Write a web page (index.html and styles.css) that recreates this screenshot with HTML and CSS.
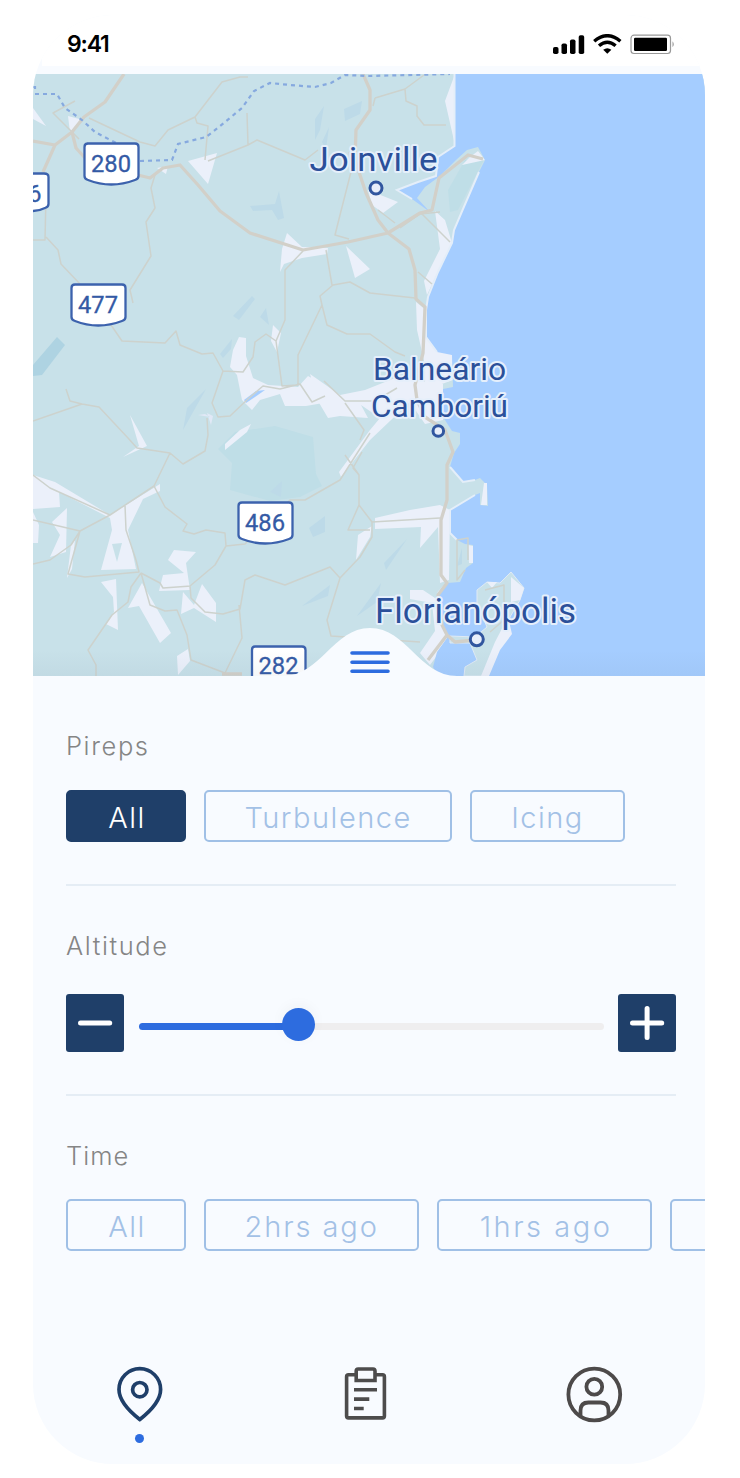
FILE: index.html
```html
<!DOCTYPE html>
<html lang="en">
<head>
<meta charset="utf-8">
<title>Pireps map</title>
<link rel="stylesheet" href="styles.css">
</head>
<body>
<main class="phone">
  <header class="status">
    <span class="clock">9:41</span>
    <svg class="status-icons" width="123" height="22" viewBox="0 0 123 22">
      <rect x="0" y="13" width="5.5" height="7" rx="1.8"/>
      <rect x="8.5" y="9.5" width="5.5" height="10.500" rx="1.800"/>
      <rect x="17" y="5.500" width="5.500" height="14.500" rx="1.800"/>
      <rect x="25.700" y="1.300" width="5.500" height="18.700" rx="1.800"/>
      <g fill="none" stroke="#000" stroke-width="3.400">
        <path d="M41.200 7.200Q54.300 -3.800 67.400 7.200"/>
        <path d="M46 11.700Q54.300 4.600 62.600 11.700"/>
      </g>
      <path d="M50.200 15.800Q54.300 12.600 58.400 15.800L54.300 19.800Z"/>
      <rect x="78" y="1.200" width="39.500" height="18.300" rx="3" fill="none" stroke="#999" stroke-width="1.200"/>
      <rect x="81" y="3.700" width="33" height="13.300" rx="1.200"/>
      <path d="M119.500 7.200q2.600 3 0 6z" fill="#999"/>
    </svg>
  </header>

  <section class="map">
    <svg class="map-art" width="672" height="602" viewBox="33 74 672 602">
      <rect class="land" x="33" y="74" width="672" height="602"/>
      <g class="forest">
        <path d="M218 449L235 432L275 426L313 437L316 474L322 486L300 497L270 501L230 490L232 463Z"/>
        <path d="M448 190L465 160L484 160L458 210L450 212Z"/>
      </g>
      <path class="lake" d="M33 365L57 337L65 345L42 375L33 376Z"/>
      <g class="hills">
        <path d="M315 119L324 106L320 130L315 140ZM344 109L362 101L360 114L345 121ZM322 142L329 127L326 149ZM250 206L275 204L279 191L284 218L278 220L272 210L253 211ZM233 316L252 296L255 299L239 320ZM260 317L266 308L269 325ZM220 354L232 339L231 349L223 358ZM183 430L187 408L206 389ZM309 528L325 516L325 532L313 537ZM302 606L330 585L328 596ZM384 563L407 539L386 570ZM357 616L381 583L377 602ZM457 566L462 548L462 564ZM270 492L282 481L281 497Z"/>
      </g>
      <g class="urban">
        <path d="M33 108L46 126L33 119ZM68 116L83 120L70 132ZM188 161L217 153L208 184ZM157 168L168 166L166 174ZM282 249L287 233L302 247L328 248L327 254L302 258L284 264L280 272ZM346 246L370 269L355 278ZM233 350L239 337L246 338L246 356L253 378L268 385L298 387L308 376L326 386L329 402L306 406L285 406L280 394L260 400L252 410L242 400L237 375L230 367ZM273 325L281 333L277 352L271 341ZM310 374L340 395L365 390L400 376L419 381L443 384L443 420L425 424L410 402L370 440L341 477L339 472L370 430L380 418L361 405L368 418L340 416L328 418L318 401ZM368 190L398 202L383 213L372 205ZM435 211L445 220L452 243L435 278L427 295L424 281L440 249ZM416 302L426 310L426 337L452 355L453 380L425 390L425 365L417 330ZM455 74L455 145L450 123L445 101ZM462 165L470 157L478 151L485 160ZM130 415L147 446L123 457L139 446Z"/>
        <path d="M33 475L55 482L110 515L160 484L160 491L143 499L128 530L136 569L101 570L112 530L110 518L59 492L60 507L33 509ZM52 522L67 508L66 552L50 557L60 535ZM33 512L39 525L38 543L33 543ZM71 545L75 540L72 569L67 578ZM101 582L116 579L118 630L106 624L114 612L113 597ZM142 583L171 633L160 643L139 606L128 608ZM174 550L196 552L186 563L190 590L159 591L163 575L184 573L168 560ZM183 592L194 605L202 584L216 603L216 622L194 608L181 614ZM177 656L188 649L190 661L178 675ZM225 444L240 430L251 424L247 432L225 450ZM375 518L410 510L440 505L450 510L449 580L440 583L438 527L420 548L421 527L375 529ZM358 535L372 526L370 537L356 560ZM410 590L423 590L438 600L443 625L450 638L430 665L420 653L435 631L432 603L410 599Z"/>
      </g>
      <path class="urban-blue" d="M205 414L198 415L210 417ZM211 425L207 413L213 416Z"/>
      <path class="park" d="M112 544L122 543L117 562Z"/>
      <path class="sea" d="M705 74H455V146L438 157L436 176L418 182L397 190L412 199L430 212L417 198L425 187L440 176L456 160L467 150L478 147L485 160L479 172L470 193L463 209L454 230L452 243L438 272L428 297L426 310V337L437 352L452 355L453 387L443 389V417L452 431L460 433V444L454 453L450 467L463 482L475 480L480 478L487 485L488 506L480 505V493L475 495L450 510V533L457 540L465 544L473 545V563L466 568L460 582L447 583L438 593L443 627L447 638L437 652L433 667L438 676H705Z"/>
      <path class="river" d="M244 400L256 391L265 390L255 397L246 403Z"/>
      <path class="island" d="M477 590L487 582L500 583L511 572L524 588L520 600L510 617L508 633L500 647L488 676H464L465 667L477 660L470 643L450 643V636L475 637L487 627L477 603Z"/>
      <path class="urban" d="M511 577L524 588L520 600L511 602ZM508 617L512 634L500 650L489 676H481L495 642ZM487 582L497 582L492 588ZM484 483H487V505H481ZM468 545L473 546V563H469Z"/>
      <path class="coast" d="M454.500 74V146L438 157L436 176L418 182L397 190L412 199M479 172L463 209L454 230L452 243L438 272L428 297L426 310V337L437 352M450 467L463 482L475 480M475 495L450 510V533L457 540M447 583L438 593"/>
      <g class="roads">
        <path d="M79 139L53 113L75 101M89 118L140 142L155 146L168 130L195 117L222 82L240 77H248M195 117L197 123L208 126L205 160M247 113L248 145L208 161M248 145L257 140L305 160L318 150M349 152L352 168L340 215L335 235L349 239M155 175L151 188L155 208L146 222L151 256L130 290L133 303M46 195L45 240L33 240M46 237L58 250L61 264L80 284M111 325L122 341L165 343L176 331L180 345L202 354L213 353L223 371L243 372L253 357L255 342L266 334L276 341L285 320L285 270L303 251M223 371L212 403L218 417L230 416L249 398L263 386L280 389L300 384L312 402L325 396M276 341L282 386L298 385V355L322 305L320 296L333 285L350 282L370 293L415 298M322 305L327 325L347 334L370 334L395 352L405 356M326 250L332 285M324 381L345 401L375 401L397 388M33 421L82 404L99 407L128 438L137 448L170 453L183 464L205 451L208 435L207 418M66 389L70 401L82 404M170 453L154 486L110 515L80 531L33 520M33 475L50 488L110 515M80 531L71 545L50 560L33 564M80 531L68 574L85 577L139 572L136 560L126 530L125 505M154 486L165 507L187 524L183 531L194 534L206 530L225 533L226 546L245 544L290 500L305 500L340 480L370 433M226 546L215 565L190 586L191 598L205 612L223 614L240 609L245 580L255 575L285 585L330 567L340 578L327 620L331 636L420 642M141 573L160 583L163 588L191 586M141 573L131 587L128 602L112 615L88 650L96 665V676M141 573L150 605L165 611L177 610L187 635L191 660L225 673L242 638L239 605M340 578L360 557L372 537L372 522L359 505L348 530H370M359 505V475L345 455M362 452L353 468L359 475M372 522L440 518M360 440L364 430L345 403M378 210L395 223M420 212L450 242M418 272L432 284M465 570L457 580L457 540L468 538V560M485 590L504 585V620L490 632"/>
        <path d="M375 98L405 89L424 75M405 89L406 101L417 106L417 116L424 125H446M373 106L375 98M440 212L420 214L400 228"/>
      </g>
      <g class="highways">
        <path d="M33 141L55 145L72 132L84 117L105 102L124 74M72 132L76 148L85 158M55 145L43 172M138 175L150 178L163 168L180 165L198 185L220 211L250 233L303 250L348 242L388 233L420 213L432 210L439 178L468 155L483 159M363 74L370 90V110L356 130L355 160L366 193L378 220L388 233L409 249L415 270L416 299L425 307L423 353L415 385L417 400L425 417L445 430L453 452L447 465V500L441 520V575L447 583L438 595L442 625L447 635L428 660M447 635L455 642L475 640M222 674H242"/>
      </g>
      <g class="border">
        <path d="M33 87H35V93M35 94H57L65 108L82 120L95 132L118 144M140 161L172 160L178 144L206 137L219 127L242 108L254 91L270 83L290 85L315 87L331 83L345 75L369 76L450 74"/>
      </g>
      <g class="shields">
        <path d="M87 143.500H135Q138.500 143.500 138.500 147V176Q138.500 179 135 180Q111 189 88 180Q84.500 179 84.500 176V147Q84.500 143.500 88 143.500Z"/>
        <path d="M33 173.500H44Q48.500 173.500 48.500 177V204Q48.500 207 45 208Q39 211 33 211"/>
        <path d="M75 284.500H122Q125.500 284.500 125.500 288V317Q125.500 320 122 321Q98 330 75 321Q71.500 320 71.500 317V288Q71.500 284.500 75 284.500Z"/>
        <path d="M242 502.500H289Q292.500 502.500 292.500 506V535Q292.500 538 289 539Q265 548 242 539Q238.500 538 238.500 535V506Q238.500 502.500 242 502.500Z"/>
        <path d="M255 646.500H302Q305.500 646.500 305.500 650V679Q305.500 682 302 683H252V650Q252 646.500 255 646.500Z"/>
      </g>
      <g class="shield-text">
        <text x="91" y="171.500" textLength="40" lengthAdjust="spacingAndGlyphs">280</text>
        <text x="28" y="202">6</text>
        <text x="78" y="313" textLength="40" lengthAdjust="spacingAndGlyphs">477</text>
        <text x="245" y="530.500" textLength="40" lengthAdjust="spacingAndGlyphs">486</text>
        <text x="258.500" y="674" textLength="40" lengthAdjust="spacingAndGlyphs">282</text>
      </g>
      <g class="towns">
        <circle cx="376" cy="188" r="6"/>
        <circle cx="438.300" cy="431" r="5.300"/>
        <circle cx="476.800" cy="639.300" r="6.500"/>
      </g>
      <g class="labels">
        <text x="309.500" y="170.500" font-size="34" textLength="128" lengthAdjust="spacingAndGlyphs">Joinville</text>
        <text x="373" y="379.500" font-size="31" textLength="133" lengthAdjust="spacingAndGlyphs">Balneário</text>
        <text x="371" y="416.500" font-size="31" textLength="137" lengthAdjust="spacingAndGlyphs">Camboriú</text>
        <text x="375" y="622.500" font-size="35" textLength="201" lengthAdjust="spacingAndGlyphs">Florianópolis</text>
      </g>
    </svg>
    <svg class="handle" width="174" height="49" viewBox="283 628 174 49">
      <path d="M283 676C321 676 333 628 370 628S419 676 457 676V677H283Z" fill="#f8fbff"/>
      <path d="M352 653H388M352 662.200H388M352 671.300H388" stroke="#2d6cdf" stroke-width="3.600" stroke-linecap="round"/>
    </svg>
  </section>

  <section class="panel">
    <div class="group">
      <h2 class="label label-pireps">Pireps</h2>
      <div class="chips">
        <button class="chip chip-all active">All</button>
        <button class="chip chip-turbulence">Turbulence</button>
        <button class="chip chip-icing">Icing</button>
      </div>
    </div>
    <div class="group">
      <h2 class="label label-altitude">Altitude</h2>
      <div class="range">
        <button class="step" aria-label="Decrease"><svg width="58" height="58" viewBox="0 0 58 58"><path d="M14.500 29H43.700"/></svg></button>
        <div class="track"><div class="fill" style="width:34.500%"></div><div class="thumb" style="left:34.500%"></div></div>
        <button class="step" aria-label="Increase"><svg width="58" height="58" viewBox="0 0 58 58"><path d="M14.500 29H43.700M29.100 14.400V43.600"/></svg></button>
      </div>
    </div>
    <div class="group group-time">
      <h2 class="label label-time">Time</h2>
      <div class="chips">
        <button class="chip chip-all">All</button>
        <button class="chip chip-hours">2hrs ago</button>
        <button class="chip chip-hours chip-one">1hrs ago</button>
        <button class="chip chip-hours" aria-label="More"></button>
      </div>
    </div>
  </section>

  <nav class="tabs">
    <a class="tab tab-map">
      <svg width="46" height="56" viewBox="117 1366 46 56" fill="none" stroke="#1f3f69" stroke-width="3.700">
        <path d="M139.800 1419.500C129 1411 119 1401 119 1389.500A20.800 20.800 0 0 1 160.600 1389.500C160.600 1401 150.600 1411 139.800 1419.500Z"/>
        <circle cx="139.800" cy="1389.700" r="7.200"/>
      </svg>
      <span class="dot"></span>
    </a>
    <a class="tab tab-list">
      <svg width="43" height="56" viewBox="344 1366 43 56" fill="none" stroke="#4d4c4c" stroke-width="3.600">
        <path d="M355.500 1374.800H348.500Q346.600 1374.800 346.600 1376.700V1416Q346.600 1417.900 348.500 1417.900H382.500Q384.400 1417.900 384.400 1416V1376.700Q384.400 1374.800 382.500 1374.800H376"/>
        <path d="M356.200 1380.500V1371Q356.200 1369 358.200 1369H373Q375 1369 375 1371V1380.500ZM354 1389.700H377M354 1399.100H369.300M354 1408.500H363.700"/>
      </svg>
    </a>
    <a class="tab tab-user">
      <svg width="57" height="57" viewBox="566 1366 57 57" fill="none" stroke="#4d4a4a" stroke-width="3.800">
        <circle cx="594.300" cy="1394.500" r="25.900"/>
        <circle cx="594.300" cy="1386.700" r="7.900"/>
        <path d="M580.500 1416V1410.500Q580.500 1402.500 588.500 1402.500H600.500Q608.500 1402.500 608.500 1410.500V1416"/>
      </svg>
    </a>
  </nav>
</main>
</body>
</html>
```
FILE: styles.css
```css
body {
  margin: 0;
  padding: 15px 35px 14px 33px;
  background: #fff;
  font-family: Inter, "Liberation Sans", sans-serif;
}

.phone {
  width: 672px;
  height: 1449px;
  overflow: hidden;
  border-radius: 80px;
  background: #f8fbff;
}

.status {
  display: flex;
  justify-content: space-between;
  align-items: flex-start;
  box-sizing: border-box;
  height: 51px;
  margin: 0 3px 8px 9px;
  padding: 14px 26px 0 24px;
  background: #fff;
}

.clock {
  padding-left: 1px;
  color: #000;
  font-size: 23px;
  font-weight: 600;
  line-height: 30px;
  letter-spacing: -1.2px;
}

.status-icons { margin-top: 5px; }

.map {
  position: relative;
  height: 602px;
}

.map::after {
  content: "";
  position: absolute;
  inset: auto 0 0;
  height: 26px;
  background: linear-gradient(rgba(90, 110, 140, 0), rgba(90, 110, 140, .06));
}

.map-art { display: block; }
.land { fill: #c8e1e9; }
.park { fill: #c8e1e9; }
.forest { fill: #bfdee7; }
.lake { fill: #aed3e2; }
.hills { fill: #bddae8; }
.urban { fill: #ebf0fa; }
.urban-blue { fill: #e1e8f6; }
.sea { fill: #a5cdff; }
.river { fill: #a5cdff; }
.island { fill: #c8e1e9; stroke: #dfeaf5; stroke-width: 1; }
.coast { fill: none; stroke: #e4eef9; stroke-width: 2; }
.roads { fill: none; stroke: #cdd2cd; stroke-width: 1.5; stroke-linejoin: round; }
.highways { fill: none; stroke: #d2d0c9; stroke-width: 3.3; stroke-linejoin: round; }
.border { fill: none; stroke: #86a9df; stroke-width: 2.2; stroke-dasharray: 4 4; }
.shields { fill: #fff; stroke: #3c62ad; stroke-width: 2.3; }

.shield-text {
  fill: #345aa5;
  stroke: #345aa5;
  stroke-width: .3px;
  font: 400 24px Roboto, sans-serif;
}

.towns { fill: #e8eefa; stroke: #31569f; stroke-width: 3; }

.labels {
  fill: #2b509a;
  stroke: #e5effb;
  stroke-width: 4px;
  stroke-linejoin: round;
  paint-order: stroke;
  font-family: Roboto, sans-serif;
}

.handle {
  position: absolute;
  z-index: 1;
  left: 250px;
  bottom: -1px;
}

.panel {
  display: flex;
  flex-direction: column;
  padding: 10px 0 0 33px;
}

.group {
  width: 610px;
  padding: 45px 0 42px;
  border-bottom: 2px solid #e5edf5;
  box-sizing: border-box;
}

.group-time { border-bottom: 0; }

.label {
  margin: 0;
  color: #858585;
  font-size: 25.5px;
  font-weight: 300;
  line-height: 30px;
  letter-spacing: 1px;
}

.label-pireps { letter-spacing: 1.6px; }
.label-altitude { letter-spacing: 1.6px; }

.chips {
  display: flex;
  gap: 18.4px;
  margin-top: 29px;
}

.group-time .chips { margin-top: 28px; }

.chip {
  flex: none;
  box-sizing: border-box;
  height: 52px;
  padding: 3px 0 0;
  border: 2px solid #a0c0e6;
  border-radius: 5px;
  background: transparent;
  color: #a3c1e6;
  font: 300 29px/40px Inter, "Liberation Sans", sans-serif;
  letter-spacing: 1.5px;
  white-space: nowrap;
}

.chip.active {
  border-color: #1f3f69;
  background: #1f3f69;
  color: #fff;
}

.chip-all { width: 120px; padding-left: 2px; }
.chip-turbulence { width: 247.5px; }
.chip-icing { width: 154.5px; }
.chip-hours { width: 214.5px; letter-spacing: 1.9px; }
.chip-one { padding-left: 3px; letter-spacing: 2.5px; }

.range {
  display: flex;
  align-items: center;
  gap: 14.5px;
  margin-top: 33px;
}

.step {
  flex: none;
  width: 58px;
  height: 58px;
  padding: 0;
  border: 0;
  border-radius: 3px;
  background: #1f3f69;
}

.step svg {
  display: block;
  fill: none;
  stroke: #fff;
  stroke-width: 5;
  stroke-linecap: round;
}

.track {
  position: relative;
  flex: 1;
  height: 7px;
  margin-top: 7px;
  border-radius: 4px;
  background: #efeeef;
}

.fill {
  height: 100%;
  border-radius: 4px;
  background: #2d6cdf;
}

.thumb {
  position: absolute;
  top: -15px;
  width: 33px;
  height: 33px;
  margin-left: -16.5px;
  border-radius: 50%;
  background: #2d6cdf;
  box-shadow: 0 -3px 14px rgba(0, 0, 0, .04);
}

.tabs {
  display: flex;
  justify-content: space-between;
  align-items: flex-start;
  margin-top: 73px;
  padding: 0 82px 0 84px;
}

.tab {
  display: flex;
  flex-direction: column;
  align-items: center;
}

.tab svg { display: block; }
.tab-list { margin: 0 -1px 0 1px; }

.dot {
  width: 9px;
  height: 9px;
  margin: 12px 1px 0 0;
  border-radius: 50%;
  background: #2d6cdf;
}
```
